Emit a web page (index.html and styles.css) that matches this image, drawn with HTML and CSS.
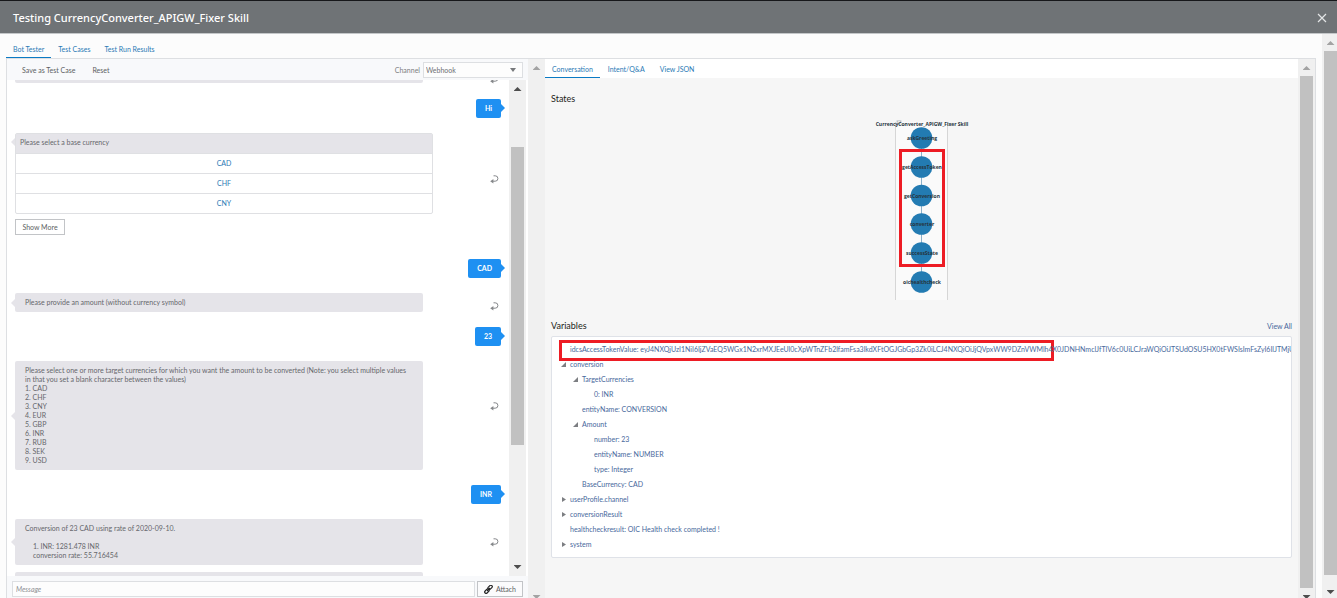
FILE: index.html
```html
<!DOCTYPE html>
<html lang="en">
<head>
<meta charset="utf-8">
<title>Testing CurrencyConverter_APIGW_Fixer Skill</title>
<link rel="stylesheet" href="styles.css">
</head>
<body>
<svg width="0" height="0" class="defs" aria-hidden="true">
  <symbol id="reply" viewBox="0 0 9 9"><path d="M3.500 .8h1.700a2.700 2.700 0 0 1 0 5.400H2" fill="none" stroke="#85878a" stroke-width="1"/><path d="M3.400 3.900v4.600L.2 6.200z" fill="#85878a"/></symbol>
</svg>
<header class="titlebar">
  <h1>Testing CurrencyConverter_APIGW_Fixer Skill</h1>
  <button class="close" aria-label="Close"><svg width="10" height="10" viewBox="0 0 10 10"><path d="M1 1l8 8M9 1l-8 8" stroke="#e4e6e7" stroke-width="1.2"/></svg></button>
</header>
<div class="body">
  <main class="content">
    <nav class="tabs">
      <a href="#" class="tab active">Bot Tester</a>
      <a href="#" class="tab">Test Cases</a>
      <a href="#" class="tab">Test Run Results</a>
    </nav>
    <div class="panel">
      <section class="tester">
        <div class="toolbar">
          <button class="text-btn">Save as Test Case</button>
          <button class="text-btn">Reset</button>
          <label class="channel-label" for="channel">Channel</label>
          <div class="select-wrap"><select id="channel"><option>Webhook</option></select></div>
        </div>
        <div class="chat">
          <div class="messages">
            <div class="bot-row clipped-top"><div class="bubble"></div><svg class="reply"><use href="#reply"/></svg></div>
            <div class="user-row first"><div class="say">Hi</div></div>
            <div class="bot-row">
              <div class="choices">
                <div class="choices-head">Please select a base currency</div>
                <button class="choice">CAD</button>
                <button class="choice">CHF</button>
                <button class="choice">CNY</button>
              </div>
              <svg class="reply lowered"><use href="#reply"/></svg>
            </div>
            <button class="more">Show More</button>
            <div class="user-row"><div class="say">CAD</div></div>
            <div class="bot-row"><div class="bubble">Please provide an amount (without currency symbol)</div><svg class="reply"><use href="#reply"/></svg></div>
            <div class="user-row"><div class="say">23</div></div>
            <div class="bot-row">
              <div class="bubble">Please select one or more target currencies for which you want the amount to be converted (Note: you select multiple values<br>in that you set a blank character between the values)<br>1. CAD<br>2. CHF<br>3. CNY<br>4. EUR<br>5. GBP<br>6. INR<br>7. RUB<br>8. SEK<br>9. USD</div>
              <svg class="reply raised"><use href="#reply"/></svg>
            </div>
            <div class="user-row"><div class="say">INR</div></div>
            <div class="bot-row">
              <div class="bubble">Conversion of 23 CAD using rate of 2020-09-10.<br><br><span class="indent">1. INR: 1281.478 INR</span><span class="indent">conversion rate: 55.716454</span></div>
              <svg class="reply level"><use href="#reply"/></svg>
            </div>
            <div class="bot-row clipped-bottom"><div class="bubble"></div></div>
          </div>
          <div class="scroll chat-scroll"><i class="up dark"></i><i class="thumb"></i><i class="down dark"></i></div>
        </div>
        <form class="composer">
          <input type="text" placeholder="Message" aria-label="Message">
          <button type="button" class="attach"><svg width="9" height="9" viewBox="0 0 9 9"><g fill="none" stroke="#222" stroke-width="1.2"><rect x="3.6" y="1" width="5" height="2.8" rx="1.4" transform="rotate(-45 6.1 2.4)"/><rect x=".4" y="4.8" width="5" height="2.8" rx="1.4" transform="rotate(-45 2.9 6.2)"/><path d="M3 6l3-3"/></g></svg>Attach</button>
        </form>
      </section>
      <div class="scroll tester-scroll"><i class="up"></i><i class="down"></i></div>
      <section class="inspector">
        <nav class="tabs sub">
          <a href="#" class="tab active">Conversation</a>
          <a href="#" class="tab">Intent/Q&amp;A</a>
          <a href="#" class="tab">View JSON</a>
        </nav>
        <div class="details">
          <h2>States</h2>
          <svg class="states" width="100" height="182" viewBox="1 0 100 182" role="img" aria-label="State flow">
            <path d="M24.500 3v178h52V3" fill="#fafafa"/>
            <path d="M24.500 3v178M76.500 3v178" stroke="#d6d6d6"/>
            <rect x="25" y="1" width="6" height="5" fill="#e4e8eb"/>
            <path d="M26 2h4l-2 3z" fill="#fff" stroke="#999" stroke-width=".5"/>
            <path d="M50.500 20v143" stroke="#6f9dbc" stroke-width=".8"/>
            <g fill="#237bb2"><circle cx="50.500" cy="19" r="10.800"/><circle cx="50.500" cy="48" r="10.800"/><circle cx="50.500" cy="76.500" r="10.800"/><circle cx="50.500" cy="105" r="10.800"/><circle cx="50.500" cy="134" r="10.800"/><circle cx="50.500" cy="163" r="10.800"/></g>
            <g class="state-text"><text x="51" y="7">CurrencyConverter_APIGW_Fixer Skill</text><text x="51" y="21">askGreeting</text><text x="51" y="50">getAccessToken</text><text x="51" y="79">getConversion</text><text x="51" y="107">converter</text><text x="51" y="136">successState</text><text x="51" y="165">oichealthcheck</text></g>
            <rect x="29.500" y="31.500" width="43" height="115" fill="none" stroke="#ed1c24" stroke-width="3"/>
          </svg>
          <div class="vars-head"><h2>Variables</h2><a href="#">View All</a></div>
          <div class="vars">
            <div class="highlight"></div>
            <ul>
              <li>idcsAccessTokenValue: eyJ4NXQjUzI1NiI6IjZVaEQ5WGx1N2xrMXJEeUl0cXpWTnZFb2lfamFsa3lkdXFtOGJGbGp3Zk0iLCJ4NXQiOiJjQVpxWW9DZnVWMlh4X0JDNHNmclJfTlV6c0UiLCJraWQiOiJTSUdOSU5HX0tFWSIsImFsZyI6IlJTMjU2In0.eyJz</li>
              <li class="open">conversion</li>
              <li class="l2 open">TargetCurrencies</li>
              <li class="l3">0: INR</li>
              <li class="l2">entityName: CONVERSION</li>
              <li class="l2 open">Amount</li>
              <li class="l3">number: 23</li>
              <li class="l3">entityName: NUMBER</li>
              <li class="l3">type: Integer</li>
              <li class="l2">BaseCurrency: CAD</li>
              <li class="shut">userProfile.channel</li>
              <li class="shut">conversionResult</li>
              <li>healthcheckresult: OIC Health check completed !</li>
              <li class="shut">system</li>
            </ul>
          </div>
        </div>
      </section>
      <div class="scroll inspector-scroll"><i class="up"></i><i class="thumb"></i><i class="down dark"></i></div>
    </div>
  </main>
  <div class="scroll page-scroll"><i class="up"></i><i class="thumb"></i><i class="down dark"></i></div>
</div>
</body>
</html>
```
FILE: styles.css
```css
* { box-sizing: border-box; }
body { margin: 0; height: 100vh; display: flex; flex-direction: column; overflow: hidden; background: #fcfcfc; font: 7px/9px Lato, "Open Sans", sans-serif; color: #5d5f63; }
button, input, select { font: inherit; color: inherit; margin: 0; padding: 0; border: 0; background: none; }
h1, h2, ul { margin: 0; padding: 0; font-weight: 400; }
a { color: #2a7ab5; text-decoration: none; }
.defs { position: absolute; }

.titlebar { flex: none; height: 34px; display: flex; align-items: center; justify-content: space-between; padding: 2px 10px 0 13px; background: #6f7376; border-top: 1px solid #16171a; border-bottom: 1px solid #c4c7c9; }
.titlebar h1 { font: 500 11px/16px "Noto Sans", sans-serif; color: #fff; }
.close, .close svg { display: block; }

.body { flex: 1; min-height: 0; display: flex; }
.content { flex: 1; min-width: 0; display: flex; flex-direction: column; padding: 0 6px; }
.tabs { flex: none; display: flex; height: 24px; }
.tab { padding: 11px 7px 0; margin-bottom: -1px; border-bottom: 2px solid transparent; }
.tab.active { border-color: #0b7ac4; }
.tabs.sub { height: 19px; background: #fff; }
.sub .tab { padding-top: 6px; margin: 0 1px 0 0; border-bottom-width: 1px; }

.panel { flex: 1; min-height: 0; display: flex; border: 1px solid #dddfe2; border-bottom: 0; background: #f6f6f6; }
.tester { flex: 0 1 521px; min-width: 0; display: flex; flex-direction: column; background: #f8f9fb; }
.toolbar { flex: none; height: 21px; display: flex; align-items: center; gap: 17px; padding: 1px 5px 0 15px; }
.channel-label { margin-left: auto; color: #7c7e82; }
.select-wrap { position: relative; width: 100px; margin-left: -14px; }
.select-wrap::after { content: ""; position: absolute; right: 7px; top: 6px; border: 3px solid transparent; border-top: 4px solid #77797c; border-bottom: 0; pointer-events: none; }
.select-wrap select { width: 100%; height: 16px; display: block; appearance: none; padding-left: 2px; border: 1px solid #dddfe2; background: #fdfdfd; color: #6e7074; }

.chat { flex: 1; min-height: 0; display: flex; overflow: hidden; background: #fff; }
.messages { flex: 1; min-width: 0; padding: 0 8px; }
.bot-row { display: flex; align-items: center; justify-content: space-between; padding-right: 2px; margin-bottom: 15px; }
.bubble, .choices { position: relative; border-radius: 2px; }
.bubble { width: 408px; min-height: 19px; padding: 5px 10px; background: #e5e4e9; color: #66676c; }
.bubble::before, .choices::before { content: ""; position: absolute; left: -4px; top: calc(50% - 4px); border: 4px solid transparent; border-left: 0; border-right-color: #e5e4e9; }
.choices { width: 418px; display: flex; flex-direction: column; border: 1px solid #dfe0e3; }
.choices::before { left: -5px; top: 4px; }
.choices-head { height: 19px; padding: 4px; background: #e5e4e9; color: #66676c; }
.choice { height: 20px; color: #2a7ab5; border-top: 1px solid #dfe0e3; }
.more { display: block; width: 50px; height: 16px; margin: -10px 0 24px; border: 1px solid #c2c4c7; background: #fff; }
.reply { flex: none; width: 9px; height: 9px; margin-top: 8px; }
.reply.lowered { margin-top: 11px; }
.reply.raised { margin-top: 0; margin-bottom: 18px; }
.reply.level { margin-top: 0; }
.indent { display: block; padding-left: 8px; }
.user-row { display: flex; justify-content: flex-end; margin-bottom: 15px; }
.user-row.first { margin-top: 16px; }
.say { position: relative; padding: 5px 9px; border-radius: 2px; background: #1e90f2; color: #fff; font-weight: 700; }
.say::after { content: ""; position: absolute; right: -4px; top: 5px; border: 4px solid transparent; border-right: 0; border-left-color: #1e90f2; }
.clipped-top { height: 3px; align-items: flex-end; }
.clipped-top .reply { margin-bottom: -1px; }
.clipped-bottom { margin-top: -8px; }
.clipped-bottom .bubble::before, .clipped-top .bubble::before { display: none; }

.composer { flex: none; display: flex; gap: 2px; height: 22px; padding: 5px 5px 1px; }
.composer input { flex: 1; min-width: 0; padding-left: 3px; border: 1px solid #dddfe2; background: #fdfdfd; }
.composer input::placeholder { font-style: italic; color: #8d8f93; opacity: 1; }
.attach { width: 46px; display: flex; align-items: center; justify-content: center; gap: 3px; border: 1px solid #c2c4c7; background: #fbfbfc; }

.scroll { flex: none; width: 17px; display: flex; flex-direction: column; align-items: center; background: #f0f0f0; }
.scroll i { flex: none; }
.up { width: 8px; height: 4px; margin-top: 7px; background: #a3a3a3; clip-path: polygon(50% 0, 100% 100%, 0 100%); }
.down { width: 8px; height: 4px; margin-top: auto; background: #a3a3a3; clip-path: polygon(0 0, 100% 0, 50% 100%); }
.dark { background: #4d4d4d; }
.thumb { width: 13px; background: #c1c1c1; }
.chat-scroll { margin-right: 2px; padding-bottom: 7px; }
.chat-scroll .thumb { height: 61%; margin-top: 56px; }
.tester-scroll .down, .inspector-scroll .down { margin-bottom: -1px; }
.inspector-scroll .thumb { flex: 1; margin: 6px 0 7px; }
.page-scroll { width: 15px; padding-left: 2px; padding-bottom: 4px; }
.page-scroll .thumb { flex: 1; margin: 6px 0 15px; }

.inspector { flex: 1; min-width: 0; display: flex; flex-direction: column; }
.details { padding: 15px 6px 0; }
.details h2 { font-size: 9px; line-height: 12px; color: #1d1e20; }
.states { display: block; margin: 14px auto 0; }
.state-text { font: 700 5px "Open Sans", sans-serif; text-anchor: middle; fill: #26343d; }
.vars-head { display: flex; justify-content: space-between; align-items: center; margin: 19px 0 4px; }
.vars-head a { color: #47689c; }
.vars { position: relative; padding: 5px 0; border: 1px solid #dfe2e8; border-radius: 2px; background: #fff; }
.highlight { position: absolute; left: 7px; top: 3px; width: 495px; height: 21px; border: 3px solid #ed1c24; }
.vars ul { list-style: none; overflow: hidden; color: #47689c; }
.vars li { position: relative; padding-left: 18px; line-height: 15px; white-space: nowrap; }
.vars .l2 { padding-left: 30px; }
.vars .l3 { padding-left: 42px; }
.open::before, .shut::before { content: ""; position: absolute; left: 9px; top: 5px; width: 5px; height: 5px; background: #7c7e82; clip-path: polygon(100% 0, 100% 100%, 0 100%); }
.l2.open::before { left: 21px; }
.shut::before { left: 10px; width: 4px; clip-path: polygon(0 0, 100% 50%, 0 100%); }
```
